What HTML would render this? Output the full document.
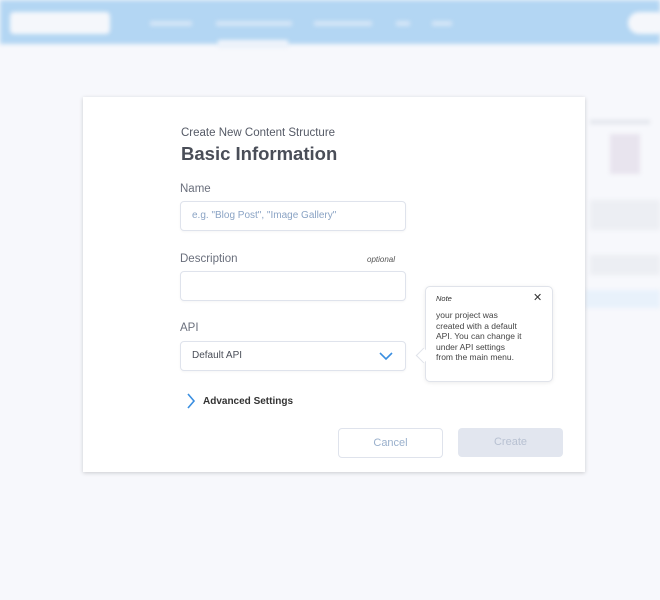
<!DOCTYPE html>
<html><head><style>
body{margin:0;width:660px;height:600px;background:#f7f8fc;font-family:"Liberation Sans",sans-serif;position:relative;overflow:hidden}
.hdr{position:absolute;left:0;top:0;width:660px;height:44px;background:#b3d6f3;filter:blur(2px)}
.blur{position:absolute;filter:blur(2px)}
.modal{position:absolute;left:83px;top:97px;width:502px;height:375px;background:#fff;box-shadow:0 1px 4px rgba(0,0,0,.18)}
.t{position:absolute;color:#555a66}
.inp{position:absolute;left:180px;width:224px;height:28px;border:1px solid #dfe3ec;border-radius:4px;background:#fff;box-shadow:0 1px 2px rgba(0,0,0,.04)}
.lbl{position:absolute;left:180px;font-size:11.5px;color:#6a6f7c}
</style></head><body>
<div class="hdr"></div>
<div class="blur" style="left:10px;top:12px;width:100px;height:22px;background:#f5f7fb;border-radius:4px"></div>
<div class="blur" style="left:150px;top:21px;width:42px;height:5px;background:#d5e6f7"></div>
<div class="blur" style="left:216px;top:21px;width:76px;height:5px;background:#d5e6f7"></div>
<div class="blur" style="left:314px;top:21px;width:58px;height:5px;background:#d5e6f7"></div>
<div class="blur" style="left:396px;top:21px;width:14px;height:5px;background:#d5e6f7"></div>
<div class="blur" style="left:432px;top:21px;width:20px;height:5px;background:#d5e6f7"></div>
<div class="blur" style="left:218px;top:40px;width:70px;height:8px;background:#eef3fa"></div>
<div class="blur" style="left:628px;top:12px;width:40px;height:22px;background:#f5f7fb;border-radius:11px"></div>
<div class="blur" style="left:590px;top:120px;width:60px;height:4px;background:#e2e5ec"></div>
<div class="blur" style="left:610px;top:134px;width:30px;height:40px;background:#e8e4ee"></div>
<div class="blur" style="left:590px;top:200px;width:70px;height:30px;background:#eceef3"></div>
<div class="blur" style="left:590px;top:255px;width:70px;height:20px;background:#eceef3"></div>
<div class="blur" style="left:585px;top:290px;width:75px;height:18px;background:#e8f1fb"></div>
<div class="modal"></div>
<div class="t" style="left:181px;top:127px;font-size:11.5px">Create New Content Structure</div>
<div class="t" style="left:181px;top:143px;font-size:18.5px;font-weight:bold;color:#4a4e58">Basic Information</div>
<div class="lbl" style="top:183px">Name</div>
<div class="inp" style="top:201px"><span style="position:absolute;left:11px;top:8px;font-size:10px;color:#8aa3c4">e.g. "Blog Post", "Image Gallery"</span></div>
<div class="lbl" style="top:253px">Description</div>
<div style="position:absolute;left:367px;top:255px;font-size:8px;font-style:italic;color:#555">optional</div>
<div class="inp" style="top:271px"></div>
<div class="lbl" style="top:322px">API</div>
<div class="inp" style="top:341px"><span style="position:absolute;left:11px;top:8px;font-size:10px;color:#4a4e58">Default API</span>
<svg style="position:absolute;left:198px;top:9px" width="14" height="10"><path d="M1 2 L7 8 L13 2" fill="none" stroke="#3a8ee0" stroke-width="1.6"/></svg></div>
<svg style="position:absolute;left:186px;top:393px" width="10" height="16"><path d="M2 1 L8 8 L2 15" fill="none" stroke="#3a8ee0" stroke-width="1.6"/></svg>
<div style="position:absolute;left:203px;top:396px;font-size:10px;font-weight:bold;color:#333">Advanced Settings</div>
<div style="position:absolute;left:338px;top:428px;width:103px;height:28px;border:1px solid #dfe3ec;border-radius:4px;background:#fff;text-align:center;line-height:28px;font-size:11px;color:#9ab0cc">Cancel</div>
<div style="position:absolute;left:458px;top:428px;width:105px;height:29px;border-radius:4px;background:#e2e6ef;text-align:center;line-height:29px;font-size:11px;color:#b8c1d2">Create</div>
<div style="position:absolute;left:425px;top:286px;width:126px;height:94px;background:#fff;border:1px solid #e0e3ea;border-radius:5px;box-shadow:0 1px 4px rgba(0,0,0,.08)"></div>
<div style="position:absolute;left:418px;top:350px;width:10px;height:10px;background:#fff;transform:rotate(45deg);border-left:1px solid #e0e3ea;border-bottom:1px solid #e0e3ea"></div>
<div style="position:absolute;left:436px;top:294px;font-size:7.5px;font-style:italic;color:#333">Note</div>
<div style="position:absolute;left:533px;top:291px;font-size:11px;color:#333">✕</div>
<div style="position:absolute;left:436px;top:310px;font-size:8.5px;line-height:10.6px;color:#444;white-space:nowrap">your project was<br>created with a default<br>API. You can change it<br>under API settings<br>from the main menu.</div>
</body></html>
